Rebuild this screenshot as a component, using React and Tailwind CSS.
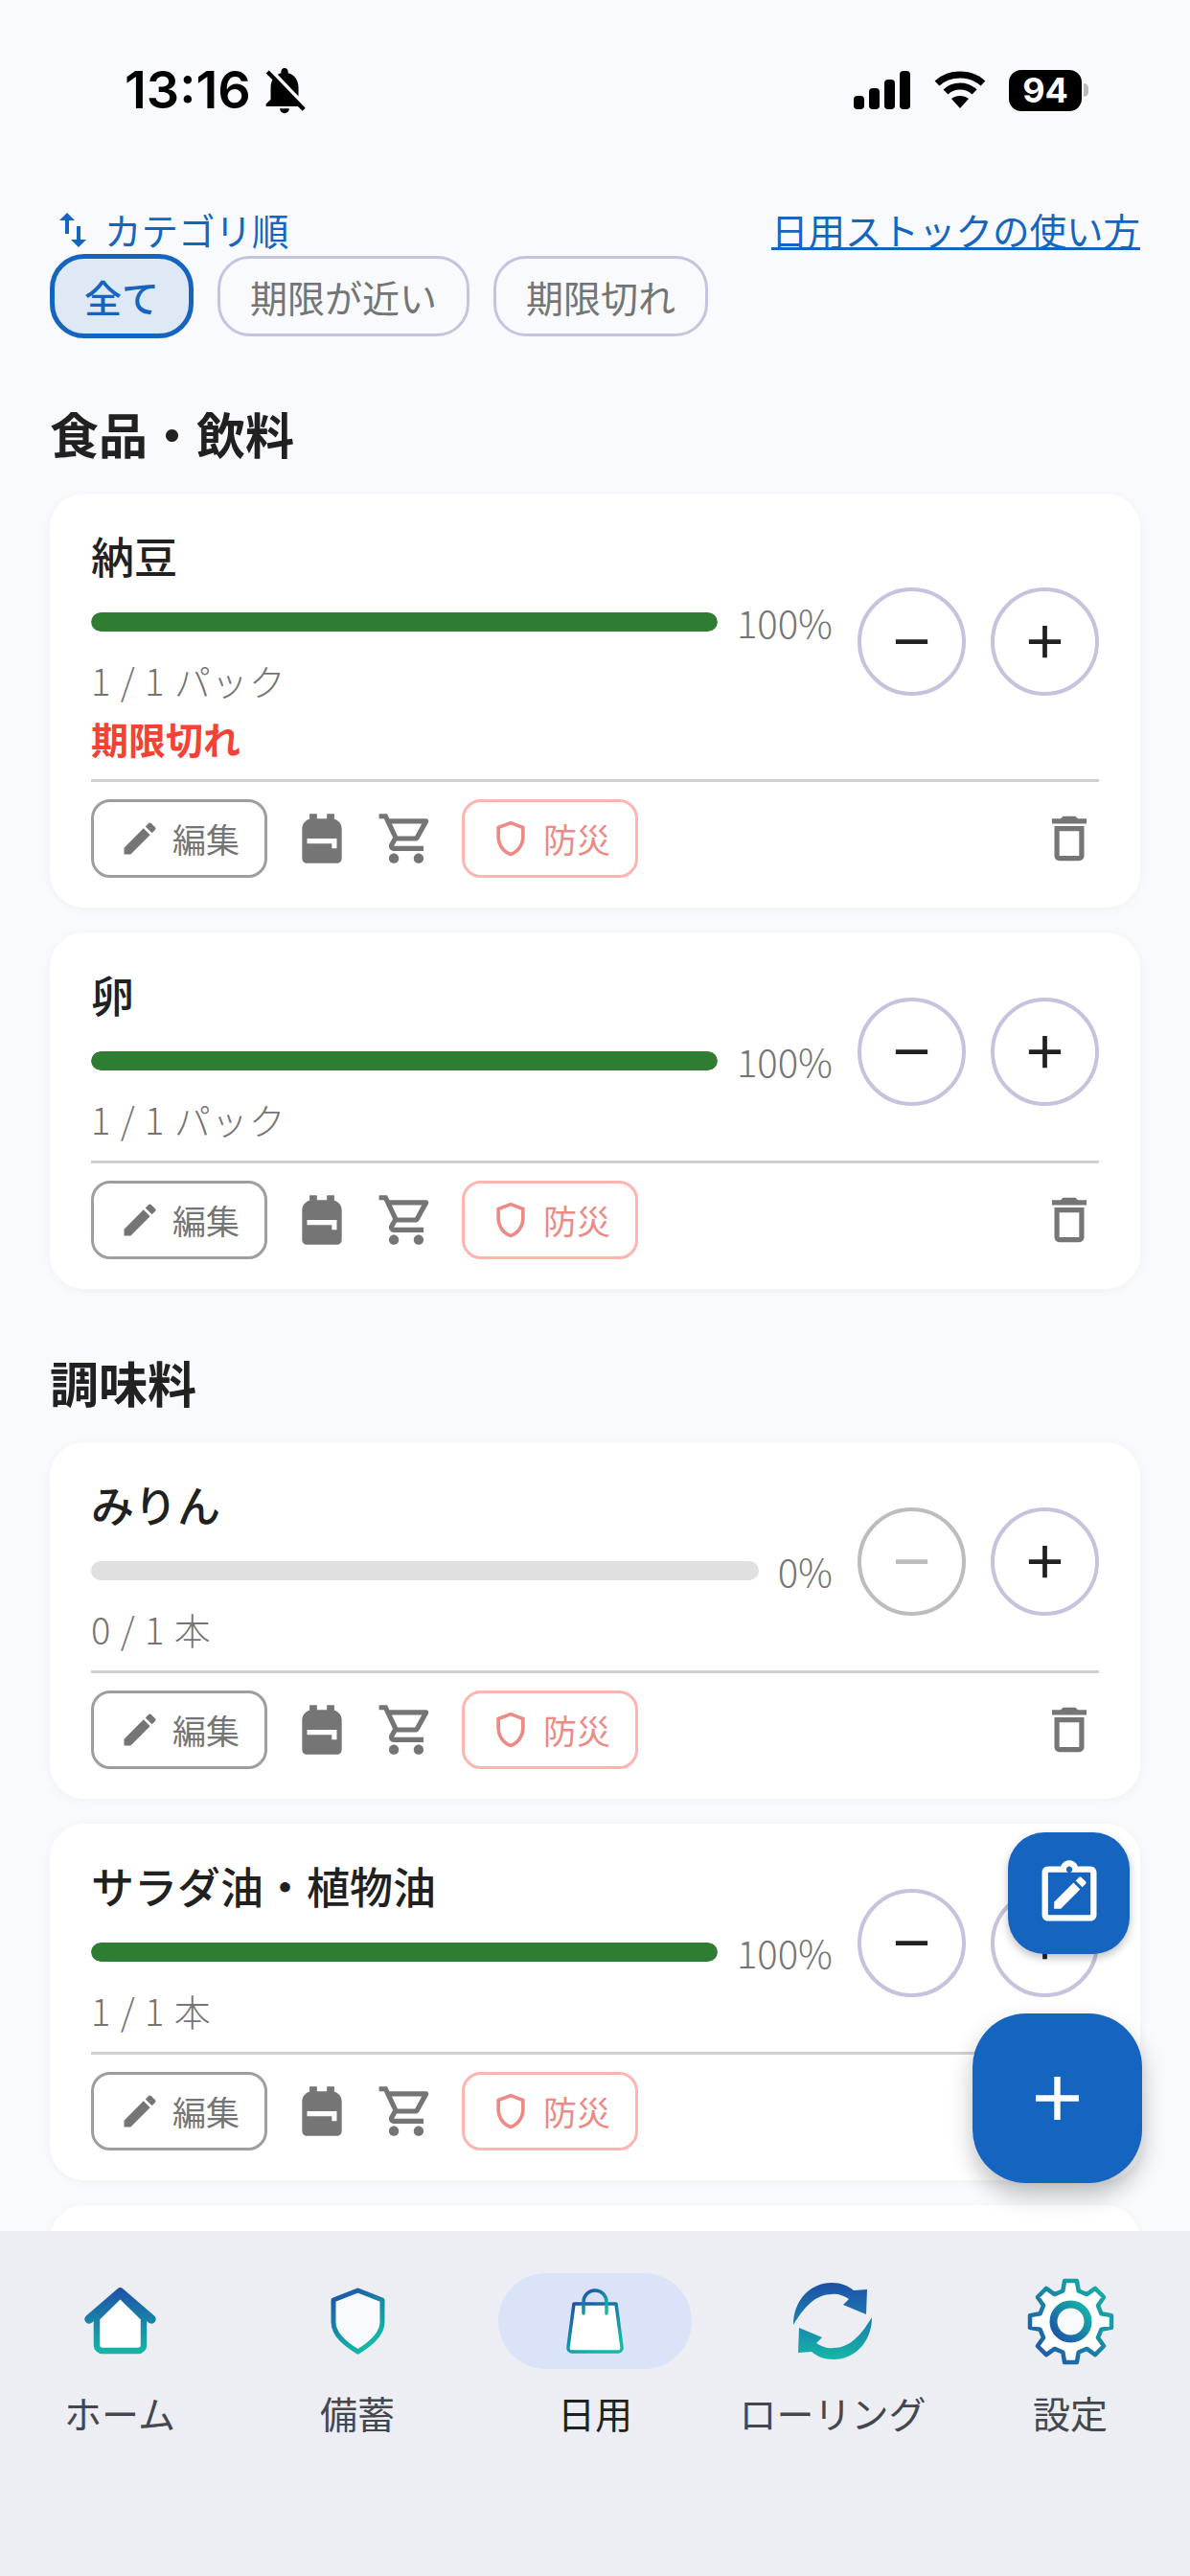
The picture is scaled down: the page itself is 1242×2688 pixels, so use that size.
import { MdAdd, MdBackpack, MdDeleteOutline, MdEdit, MdNotificationsOff, MdOutlineShield, MdOutlineShoppingCart, MdRemove, MdSwapVert } from 'react-icons/md';

const jp = { fontFamily: '"Noto Sans CJK JP", "Noto Sans", sans-serif' };

// 8 teeth for the settings icon
const gearPath = (() => {
    const pts = [];
    for (let i = 0; i < 8; i++) {
        const a = (i * Math.PI) / 4 - Math.PI / 2;
        const r1 = 33;
        const r2 = 43;
        [[r1, -0.25], [r2, -0.15], [r2, 0.15], [r1, 0.25]].forEach(([r, d]) => {
            pts.push(`${(46.5 + r * Math.cos(a + d)).toFixed(1)} ${(46.5 + r * Math.sin(a + d)).toFixed(1)}`);
        });
    }
    return 'M' + pts.join('L') + 'Z';
})();

function HomeIcon() {
    return (
        <svg width="75" height="70" viewBox="0 0 75 70">
            <defs>
                <linearGradient id="g-home" gradientUnits="userSpaceOnUse" x1="0" y1="0" x2="0" y2="70">
                    <stop offset="0" stopColor="#1e4fa8" />
                    <stop offset="1" stopColor="#14b8a6" />
                </linearGradient>
            </defs>
            <path d="M13 32 L37.5 8 L62 32 V60 a6 6 0 0 1 -6 6 H19 a6 6 0 0 1 -6 -6Z" fill="#fff" stroke="url(#g-home)" strokeWidth="6.5" strokeLinejoin="round" />
            <path d="M5 33 L37.5 5 L70 33" fill="none" stroke="url(#g-home)" strokeWidth="9.5" strokeLinecap="round" strokeLinejoin="round" />
        </svg>
    );
}

function ShieldIcon() {
    return (
        <svg width="57" height="70" viewBox="0 0 57 70">
            <defs>
                <linearGradient id="g-shield" x1="0" y1="0" x2="0.5" y2="1">
                    <stop offset="0" stopColor="#1e4fa8" />
                    <stop offset="1" stopColor="#14b8a6" />
                </linearGradient>
            </defs>
            <path d="M28.5 3 L54 13 V36 C54 50 40 60 28.5 67 C17 60 3 50 3 36 V13Z" fill="#f8fafd" stroke="url(#g-shield)" strokeWidth="5" strokeLinejoin="round" />
        </svg>
    );
}

function BagIcon() {
    return (
        <svg width="62" height="70" viewBox="0 0 62 70">
            <defs>
                <linearGradient id="g-bag" x1="0" y1="0" x2="0.6" y2="1">
                    <stop offset="0" stopColor="#1e4fa8" />
                    <stop offset="1" stopColor="#14b8a6" />
                </linearGradient>
            </defs>
            <path d="M9 17 H53 L59 62 a4 4 0 0 1 -4 5 H7 a4 4 0 0 1 -4 -5Z" fill="#fff" stroke="url(#g-bag)" strokeWidth="3.5" strokeLinejoin="round" />
            <path d="M19 27 V15 a12 12 0 0 1 24 0 V27" fill="none" stroke="url(#g-bag)" strokeWidth="3.5" strokeLinecap="round" />
        </svg>
    );
}

function SyncIcon() {
    return (
        <svg width="82" height="80" viewBox="0 0 82 80">
            <defs>
                <linearGradient id="g-sync" gradientUnits="userSpaceOnUse" x1="0" y1="0" x2="0" y2="80">
                    <stop offset="0" stopColor="#1e4fa8" />
                    <stop offset="0.5" stopColor="#1b7fb0" />
                    <stop offset="1" stopColor="#14b8a6" />
                </linearGradient>
            </defs>
            <path d="M0 44 C0 18 18 0 40 0 C50 0 57 3 63 8 L77 7 L76 33 L52 23 L58 17 C52 13 46 11 40 12 C24 12 12 24 0 44Z" fill="url(#g-sync)" />
            <path d="M82 36 C82 62 64 80 42 80 C32 80 25 77 19 72 L5 73 L6 47 L30 57 L24 63 C30 67 36 69 42 68 C58 68 70 56 82 36Z" fill="url(#g-sync)" />
        </svg>
    );
}

function GearIcon() {
    return (
        <svg width="93" height="93" viewBox="0 0 93 93">
            <defs>
                <linearGradient id="g-gear" x1="0" y1="1" x2="1" y2="0">
                    <stop offset="0" stopColor="#1e4fa8" />
                    <stop offset="1" stopColor="#14b8a6" />
                </linearGradient>
            </defs>
            <path d={gearPath} fill="#fff" stroke="url(#g-gear)" strokeWidth="4.5" strokeLinejoin="round" />
            <circle cx="46.5" cy="46.5" r="18" fill="#f8fafd" stroke="url(#g-gear)" strokeWidth="8" />
        </svg>
    );
}

function ClipboardIcon() {
    return (
        <svg width="76" height="76" viewBox="0 0 24 24" fill="#fff">
            <path d="M19 3h-4.18C14.4 1.84 13.3 1 12 1s-2.4.84-2.82 2H5c-1.1 0-2 .9-2 2v14c0 1.1.9 2 2 2h14c1.1 0 2-.9 2-2V5c0-1.1-.9-2-2-2zm-7 0c.55 0 1 .45 1 1s-.45 1-1 1-1-.45-1-1 .45-1 1-1zm7 16H5V5h14v14z" />
            <path d="M7 17v-2.2l6.4-6.4 2.2 2.2L9.2 17H7zm9.3-7.1l-2.2-2.2 1.1-1.1c.2-.2.6-.2.8 0l1.4 1.4c.2.2.2.6 0 .8l-1.1 1.1z" />
        </svg>
    );
}

function StatusBar() {
    return (
        <div className="h-[215px] flex items-start justify-between pl-[130px] pr-[106px] pt-[64px]">
            <div className="flex items-center gap-[6px]">
                <span className="text-[54px] leading-[60px] font-semibold text-black" style={{ fontFamily: 'Inter, sans-serif' }}>13:16</span>
                <MdNotificationsOff className="w-[58px] h-[58px] text-black" />
            </div>
            <div className="flex items-center gap-[24px] h-[60px]">
                <svg width="60" height="40" viewBox="0 0 60 40" fill="#000">
                    <rect x="0" y="26" width="11" height="14" rx="4" />
                    <rect x="16" y="18" width="11" height="22" rx="4" />
                    <rect x="32" y="9" width="11" height="31" rx="4" />
                    <rect x="48" y="0" width="11" height="40" rx="4" />
                </svg>
                <svg width="54" height="40" viewBox="0 0 54 40" fill="none" stroke="#000" strokeWidth="7">
                    <path d="M3 13 C16 1 38 1 51 13" />
                    <path d="M12 22 C20 14 34 14 42 22" />
                    <path d="M27 39 L18 29 C23 25 31 25 36 29Z" fill="#000" stroke="none" />
                </svg>
                <div className="flex items-center gap-[2px]">
                    <div className="w-[76px] h-[43px] rounded-[13px] bg-black flex items-center justify-center text-white text-[36px] leading-none font-bold" style={{ fontFamily: 'Inter, sans-serif' }}>94</div>
                    <div className="w-[5px] h-[14px] rounded-r-full bg-[#bbb]"></div>
                </div>
            </div>
        </div>
    );
}

function Chip({ label, active }) {
    if (active) {
        return <div className="h-[88px] px-[31px] flex items-center rounded-[36px] border-[5px] border-[#1565c0] bg-[#dfe9f5] text-[#1565c0] text-[39px] font-medium">{label}</div>;
    }
    return <div className="h-[84px] px-[31px] flex items-center rounded-[34px] border-[3px] border-[#c5c3dd] text-[#757575] text-[39px]">{label}</div>;
}

function Card({ name, pct, qty, expired }) {
    const empty = pct === 0;
    return (
        <div className="bg-white rounded-[36px] px-[43px] pb-[31px] pt-[32px] shadow-[0_2px_12px_rgba(30,40,80,0.04)]">
            <div className="flex items-center">
                <div className="flex-1 min-w-0">
                    <div className="h-[66px] leading-[66px] text-[45px] text-[#212121] font-medium">{name}</div>
                    <div className="h-[50px] mt-[11px] flex items-center">
                        <div className="flex-1 h-[20px] rounded-full bg-[#e0e0e0] overflow-hidden">
                            <div className="h-full rounded-full bg-[#2e7d32]" style={{ width: pct + '%' }}></div>
                        </div>
                        <div className="ml-[20px] text-[40px] leading-[50px] font-light text-[#757575]">{pct}%</div>
                    </div>
                    <div className="h-[60px] mt-[6px] leading-[60px] text-[38px] font-light text-[#757575] tracking-[1px]">{qty}</div>
                    {expired && <div className="h-[60px] leading-[60px] text-[39px] font-bold text-[#f44336]">期限切れ</div>}
                </div>
                <div className="flex gap-[26px] ml-[26px] mb-[8px]">
                    <button className={'w-[113px] h-[113px] rounded-full border-[4px] flex items-center justify-center ' + (empty ? 'border-[#bdbdbd] text-[#bdbdbd]' : 'border-[#c5c3dd] text-[#212121]')}>
                        <MdRemove className="w-[57px] h-[57px]" />
                    </button>
                    <button className="w-[113px] h-[113px] rounded-full border-[4px] border-[#c5c3dd] text-[#212121] flex items-center justify-center">
                        <MdAdd className="w-[57px] h-[57px]" />
                    </button>
                </div>
            </div>
            <div className="h-[3px] bg-[#cfcfd6] mt-[13px]"></div>
            <div className="flex items-center mt-[18px]">
                <button className="w-[184px] h-[82px] rounded-[20px] border-[3px] border-[#9e9e9e] flex items-center justify-center gap-[12px] text-[35px] text-[#757575]">
                    <MdEdit className="w-[44px] h-[44px]" />
                    編集
                </button>
                <MdBackpack className="ml-[26px] w-[62px] h-[62px] text-[#757575]" />
                <MdOutlineShoppingCart className="ml-[26px] w-[62px] h-[62px] text-[#757575]" />
                <button className="ml-[27px] w-[184px] h-[82px] rounded-[20px] border-[3px] border-[#ffb4ae] flex items-center justify-center gap-[12px] text-[35px] text-[#ec8a85]">
                    <MdOutlineShield className="w-[44px] h-[44px]" />
                    防災
                </button>
                <MdDeleteOutline className="ml-auto w-[62px] h-[62px] text-[#757575]" />
            </div>
        </div>
    );
}

function SectionTitle({ children, first }) {
    return <div className={'h-[70px] leading-[70px] text-[51px] font-semibold text-[#212121] mb-[28px] ' + (first ? 'mt-[64px]' : 'mt-[62px]')}>{children}</div>;
}

function NavItem({ label, active, children }) {
    return (
        <div className="flex flex-col items-center">
            <div className={'w-[202px] h-[100px] rounded-full flex items-center justify-center ' + (active ? 'bg-[#dbe3f8]' : '')}>
                {children}
            </div>
            <div className={'mt-[15px] text-[39px] leading-[60px] whitespace-nowrap ' + (active ? 'text-[#212121]' : 'text-[#44474e]')}>{label}</div>
        </div>
    );
}

export default function App() {
    return (
        <div className="relative w-[1242px] h-[2688px] overflow-hidden bg-[#f8fafd] flex flex-col" style={jp}>
            <div className="flex-1 min-h-0 overflow-hidden">
                <StatusBar />
                <div className="px-[52px]">
                    <div className="h-[50px] flex items-center justify-between text-[#1565c0] text-[38.5px]">
                        <div className="flex items-center gap-[9px]">
                            <MdSwapVert className="w-[48px] h-[48px]" />
                            <span>カテゴリ順</span>
                        </div>
                        <span className="underline">日用ストックの使い方</span>
                    </div>
                    <div className="flex items-center gap-[25px]">
                        <Chip label="全て" active />
                        <Chip label="期限が近い" />
                        <Chip label="期限切れ" />
                    </div>

                    <SectionTitle first>食品・飲料</SectionTitle>
                    <div className="flex flex-col gap-[26px]">
                        <Card name="納豆" pct={100} qty="1 / 1 パック" expired />
                        <Card name="卵" pct={100} qty="1 / 1 パック" />
                    </div>

                    <SectionTitle>調味料</SectionTitle>
                    <div className="flex flex-col gap-[26px]">
                        <Card name="みりん" pct={0} qty="0 / 1 本" />
                        <Card name="サラダ油・植物油" pct={100} qty="1 / 1 本" />
                        {/* next card is only peeking out above the nav */}
                        <div className="h-[200px] bg-white rounded-[36px] shadow-[0_2px_12px_rgba(30,40,80,0.04)]"></div>
                    </div>
                </div>
            </div>

            <nav className="h-[360px] shrink-0 bg-[#eceef4] pt-[44px] grid grid-cols-5 px-[1px] justify-items-center items-start">
                <NavItem label="ホーム"><HomeIcon /></NavItem>
                <NavItem label="備蓄"><ShieldIcon /></NavItem>
                <NavItem label="日用" active><BagIcon /></NavItem>
                <NavItem label="ローリング"><SyncIcon /></NavItem>
                <NavItem label="設定"><GearIcon /></NavItem>
            </nav>

            <button className="absolute left-[1052px] top-[1912px] w-[127px] h-[127px] rounded-[38px] bg-[#1565c0] flex items-center justify-center shadow-[0_4px_10px_rgba(0,0,0,0.25)]">
                <ClipboardIcon />
            </button>
            <button className="absolute left-[1015px] top-[2101px] w-[177px] h-[177px] rounded-[56px] bg-[#1565c0] text-white flex items-center justify-center shadow-[0_12px_24px_rgba(0,0,0,0.25)]">
                <MdAdd className="w-[77px] h-[77px]" />
            </button>
        </div>
    );
}
